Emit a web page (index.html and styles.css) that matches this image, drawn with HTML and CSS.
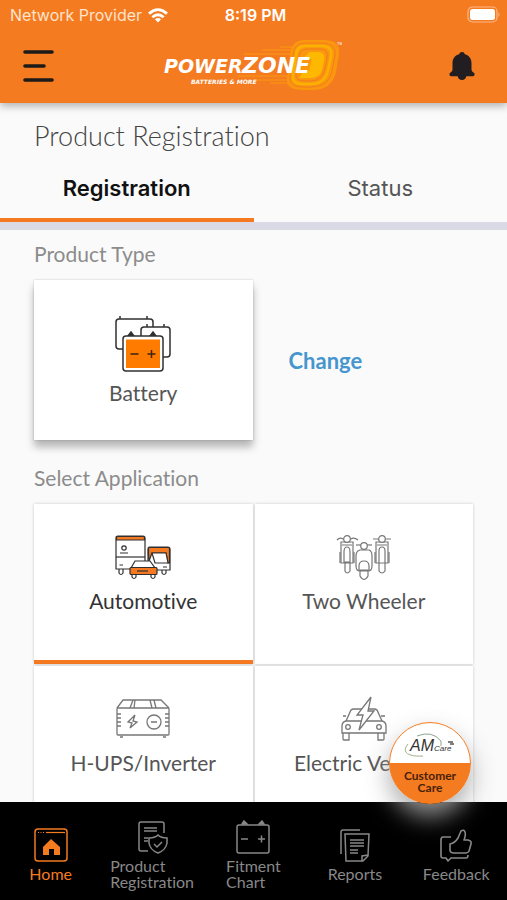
FILE: index.html
```html
<!DOCTYPE html>
<html lang="en">
<head>
<meta charset="utf-8">
<meta name="viewport" content="width=device-width, initial-scale=1">
<title>Product Registration</title>
<link rel="stylesheet" href="styles.css">
</head>
<body>
<div class="app">
  <header class="header">
    <div class="status">
      <span class="carrier">Network Provider
        <svg width="20" height="15" viewBox="0 0 20 15" aria-hidden="true"><g fill="none" stroke="#fff" stroke-width="2.8"><path d="M1 5.6Q10-2.4 19 5.6"/><path d="M4.3 9.2Q10 4.2 15.7 9.2"/></g><path d="M6.9 11.3Q10 8.8 13.1 11.3L10 14.6z" fill="#fff"/></svg>
      </span>
      <span class="time">8:19 PM</span>
      <span class="battery">
        <svg width="34" height="18" viewBox="0 0 34 18" aria-hidden="true"><rect x="1" y="1" width="29" height="15" rx="4.5" fill="none" stroke="#fbb98a" stroke-width="1.2"/><rect x="3" y="3" width="25" height="11" rx="2.5" fill="#fff"/><path d="M31.5 6Q33.6 8.500 31.500 11z" fill="#fbb98a"/></svg>
      </span>
    </div>
    <div class="bar">
      <button class="icon-button" aria-label="Menu">
        <svg width="32" height="34" viewBox="0 0 32 34"><path d="M3 3H30M3 17H22M3 31H30" stroke="#1d1a1a" stroke-width="3.6" stroke-linecap="round"/></svg>
      </button>
      <svg class="logo" width="182" height="56" viewBox="0 0 182 56" role="img" aria-label="Powerzone Batteries &amp; More">
        <g fill="none" stroke="#fa9b0c">
          <path d="M84 16H132M102 12H136M120 9H138M78 38H130M94 42H130M110 45H136" stroke-width="1"/>
        </g>
        <path d="M144 2H164Q181 2 179 17L176 34Q172 52 152 52H143Q126 52 127 41L130 16Q132 2 144 2z" fill="#fa970f"/>
        <g fill="none" stroke="#f47b20" stroke-width="1">
          <path d="M145 5H162Q177 5 175 18L172 33Q169 49 151 49H143Q129 49 130 40L133 17Q134 5 145 5z"/>
          <path d="M147 11H160Q169 11 167 21L165 31Q162 43 150 43H145Q135 43 136 36L139 20Q139 11 147 11z"/>
        </g>
        <path d="M146 8H161Q173 8 171 19L168 32Q165 46 151 46H144Q132 46 133 38L136 18Q136 8 146 8z" fill="none" stroke="#fbb100" stroke-width="2.500"/>
        <path d="M150 15H159Q165 16 163 23L161 32Q159 39 150 39H141L144 34H150L153 20H145z" fill="#ffb800" stroke="#ffb800" stroke-width="2"/>
        <text class="logo-name" x="4" y="35" font-size="19">POWER</text>
        <text class="logo-name" x="82" y="35" font-size="22">ZONE</text>
        <text class="logo-name" x="31" y="46" font-size="6">BATTERIES &amp; MORE</text>
        <text class="logo-mark" x="177" y="7" font-size="4">TM</text>
      </svg>
      <button class="icon-button" aria-label="Notifications">
        <svg width="28" height="30" viewBox="0 0 28 30"><path d="M14 1Q16.500 1 16.800 3.200C21.500 4.500 23.500 8 23.500 12V19Q24 21 25.500 21.400Q27 22 26.500 24Q26 25.200 24.500 25.200H18.300Q17.500 29 14 29T9.700 25.200H3.500Q2 25.200 1.500 24Q1 22 2.500 21.400Q4 21 4.500 19V12C4.500 8 6.500 4.500 11.200 3.200Q11.500 1 14 1z" fill="#211d20"/></svg>
      </button>
    </div>
  </header>

  <main class="content">
    <h1>Product Registration</h1>
    <div class="tabs" role="tablist">
      <button class="tab tab-active" role="tab" aria-selected="true">Registration</button>
      <button class="tab" role="tab" aria-selected="false">Status</button>
    </div>
    <section class="section">
      <h2>Product Type</h2>
      <div class="type-row">
        <button class="card card-raised">
          <svg width="56" height="58" viewBox="0 0 56 58" aria-hidden="true"><g fill="#fff" stroke="#303030" stroke-width="1.500"><path d="M5 1V4M32 1V4" /><rect x="1" y="4" width="37" height="30" rx="3"/><path d="M32 9V12M49 9V12"/><rect x="26" y="12" width="29" height="30" rx="3"/><path d="M13 21L16 17L19 21zM35 21L38 17L41 21z" fill="#303030"/><rect x="8" y="21" width="40" height="35" rx="3"/></g><path d="M11 24.500H45V53H11z" fill="#ff7b00"/><path d="M15.500 39H23.500M32.500 39H40.500M36.500 35V43" stroke="#3d2412" stroke-width="1.500"/></svg>
          <span>Battery</span>
        </button>
        <a class="change" href="#change">Change</a>
      </div>
      <h2 class="application-title">Select Application</h2>
      <div class="grid">
        <button class="card card-selected">
          <svg width="56" height="46" viewBox="0 0 56 46" aria-hidden="true"><g fill="#fff" stroke="#303030" stroke-width="1.200"><path d="M4 34V38Q6 41 8 38V34M47 34V38Q49 41 51 38V34"/><path d="M3 1H28Q30 1 30 3V34H1V3Q1 1 3 1z"/><path d="M1.500 5V3Q1.500 1.500 3 1.500H28Q29.500 1.500 29.500 3V5z" fill="#f47920"/><path d="M1 22H30"/><circle cx="9" cy="13" r="2.200"/><path d="M5 18H13M4.500 30H8"/><path d="M34 12H53Q55 12 55 14V35H33V14Q33 12 34 12z"/><path d="M33.500 18V14Q33.500 12.500 35 12.500H53Q54.500 12.500 54.500 14V28H53L51 18H37L34 26z" fill="#f47920"/><path d="M37 18H51L53 28H40zM48 32H52"/><path d="M17 38V42Q19 45 21 42V38M36 38V42Q38 45 40 42V38"/><path d="M16 33L20 26H35L40 33z"/><rect x="15" y="32.500" width="27" height="7" rx="1" fill="#f47920"/><path d="M22 36H33"/></g></svg>
          <span>Automotive</span>
        </button>
        <button class="card">
          <svg width="56" height="46" viewBox="0 0 56 46" aria-hidden="true"><g fill="#fff" stroke="#777" stroke-width="1.200"><path d="M1 5Q4 2 7 4H15Q18 2 22 5" fill="none"/><path d="M5 7H17V28H5zM9 28V36Q11 40 14 36V28zM8 27V17Q8 12 11 12T14 17V27z"/><circle cx="11" cy="4" r="3.300"/><path d="M6 10H16M4 17V28M18 17V28M37 4H55"/><path d="M40 7H52V28H40zM43 28V36Q46 40 49 36V28zM43 28V16Q43 12 46 12T49 16V28z"/><circle cx="46" cy="4" r="3.300"/><path d="M41 10H51M39 17V28M53 17V28"/><path d="M24 15H33Q36 16 36 21V31Q36 36 32 36H24Q20 36 20 31V21Q20 16 24 15z"/><path d="M20 10H36"/><circle cx="28" cy="11" r="3.300"/><path d="M24 36H32V41Q28 48 24 41zM23 35V31Q23 26 28 26T33 31V35z"/></g></svg>
          <span>Two Wheeler</span>
        </button>
        <button class="card">
          <svg width="56" height="46" viewBox="0 0 56 46" aria-hidden="true"><g fill="none" stroke="#777" stroke-width="1.300"><path d="M2 11L8 3H46L54 11M15 11L18 3M19 11L20 3M37 11L35 3M41 11L39 3"/><rect x="2" y="11" width="52" height="27" rx="1"/><path d="M2 17H6M2 21H6M2 25H6M2 29H6M50 17H54M50 21H54M50 25H54M50 29H54M5 40H8M48 40H51"/><circle cx="39" cy="25" r="7"/><path d="M36 25H42M20 18L13 25L17 26L15 31L22 25L18 24z"/></g></svg>
          <span>H-UPS/Inverter</span>
        </button>
        <button class="card">
          <svg width="56" height="46" viewBox="0 0 56 46" aria-hidden="true"><g fill="#fff" stroke="#777" stroke-width="1.300"><path d="M10 24L15 13Q16 12 18 12H38Q40 12 41 13L46 24M10 19H7M45 19H49"/><path d="M10 24H46Q50 25 50 29V36H6V29Q6 25 10 24zM7 36V42Q7 43 8 43H13V36M42 36V43H47Q48 43 48 42V36M6 36V33"/><circle cx="12" cy="30" r="2.300"/><circle cx="43" cy="30" r="2.300"/><path d="M35 0L21 18H27L23 33L38 14H32z"/></g></svg>
          <span>Electric Vehicle</span>
        </button>
      </div>
    </section>
  </main>

  <button class="care">
    <svg width="52" height="28" viewBox="0 0 52 28" aria-hidden="true"><path d="M13 4Q28-2 37 9V14" fill="none" stroke="#8ca58c" stroke-width="1"/><path d="M4 12C-3 20 4 25 19 24" fill="none" stroke="#9fb08d" stroke-width="1"/><text class="care-logo" x="6" y="19" font-size="16">AM</text><text class="care-logo" x="30" y="19" font-size="8">Care</text><path d="M44 10H49M46 12H50" stroke="#555" stroke-width="1.500"/></svg>
    <span>Customer<br>Care</span>
  </button>

  <nav class="nav">
    <a class="nav-active" href="#home">
      <svg width="34" height="34" viewBox="0 0 34 34" aria-hidden="true"><rect x="1" y="1" width="32" height="32" rx="3" fill="none" stroke="currentColor" stroke-width="1.500"/><path d="M12 4.500H31" stroke="currentColor" stroke-width="1.200"/><path d="M4 4.500H10" stroke="currentColor" stroke-dasharray="1 1.500"/><path d="M17 11L26 19V27H20V21H15V27H9V19z" fill="currentColor"/></svg>
      <span>Home</span>
    </a>
    <a href="#registration">
      <svg width="34" height="34" viewBox="0 0 34 34" aria-hidden="true"><g fill="none" stroke="currentColor" stroke-width="1.500"><path d="M13 31H6Q4 31 4 29V4Q4 2 6 2H27Q29 2 29 4V13M9 8H22M9 11H22M9 18H13M9 21H13"/><path d="M23 15Q26 18 32 18V23Q31 30 23 33Q15 30 14 23V18Q20 18 23 15z"/><path d="M19 24L22 27L27 22"/></g></svg>
      <span>Product<br>Registration</span>
    </a>
    <a href="#fitment">
      <svg width="34" height="34" viewBox="0 0 34 34" aria-hidden="true"><g fill="none" stroke="currentColor" stroke-width="1.500"><rect x="1" y="5" width="32" height="28" rx="2"/><path d="M5 19H12M22 19H29M25.500 15.500V22.500"/><path d="M6 4L8 1L11 4zM23 4L26 1L28 4z" fill="currentColor"/></g></svg>
      <span>Fitment<br>Chart</span>
    </a>
    <a href="#reports">
      <svg width="34" height="34" viewBox="0 0 34 34" aria-hidden="true"><g fill="none" stroke="currentColor" stroke-width="1.500"><path d="M3 26V4Q3 2 5 2H22"/><path d="M7 6H31L30 28L25 33H8zM30 27L24 28V33M12 12H26M12 15H26M12 18H26M12 22H20M12 25H20"/></g></svg>
      <span>Reports</span>
    </a>
    <a href="#feedback">
      <svg width="34" height="34" viewBox="0 0 34 34" aria-hidden="true"><g fill="none" stroke="currentColor" stroke-width="1.600" stroke-linejoin="round"><path d="M12 9H4Q2 9 2 12V28Q2 30 4 30H7L9 33L12 30H27Q29 30 29 27"/><path d="M11 16Q16 15 19 10L22 3Q25 1 26 4Q27 7 25 12H29Q33 13 32 16L30 23Q29 25 27 25H15Q11 25 11 22z"/></g></svg>
      <span>Feedback</span>
    </a>
  </nav>
</div>
</body>
</html>
```

FILE: styles.css
```css
* {
  box-sizing: border-box;
}

body {
  margin: 0;
  background: #fafafa;
  color: #555;
  font-family: Lato, "Liberation Sans", sans-serif;
  font-variant-ligatures: none;
}

button {
  margin: 0;
  padding: 0;
  border: 0;
  background: none;
  color: inherit;
  font: inherit;
  font-variant-ligatures: none;
}

a {
  color: inherit;
  text-decoration: none;
}

svg {
  display: block;
}

.app {
  position: relative;
  display: flex;
  flex-direction: column;
  height: 100vh;
  overflow: hidden;
}

.header {
  z-index: 1;
  flex: none;
  background: #f47b20;
  box-shadow: 0 3px 8px rgba(0, 0, 0, 0.3);
}

.status {
  display: grid;
  grid-template-columns: 1fr auto 1fr;
  align-items: center;
  height: 30px;
  padding: 0 6px 0 10px;
  color: #fff;
  font: 500 16px/20px Inter, sans-serif;
}

.carrier {
  display: flex;
  align-items: center;
  gap: 6px;
  color: #ffe3cd;
  font-weight: 400;
}

.time {
  font-weight: 600;
}

.battery {
  justify-self: end;
}

.bar {
  display: flex;
  align-items: center;
  justify-content: space-between;
  height: 73px;
  padding: 0 31px 2px 22px;
}

.logo-name {
  fill: #fff;
  font-family: "DejaVu Sans", sans-serif;
  font-style: italic;
  font-weight: 700;
}

.logo-mark {
  fill: #fff;
  font-family: "Liberation Sans", sans-serif;
}

.content {
  flex: 1;
  min-height: 0;
  overflow: hidden;
}

h1 {
  margin: 0;
  padding: 17px 34px 1px;
  color: #444;
  font-size: 27px;
  font-weight: 300;
  line-height: 32px;
}

h2 {
  margin: 0;
  color: #8c8c8c;
  font-size: 21px;
  font-weight: 400;
  line-height: 24px;
}

.tabs {
  display: grid;
  grid-template-columns: 1fr 1fr;
  border-bottom: 8px solid #dadae6;
}

.tab {
  height: 69px;
  padding-top: 4px;
  border-bottom: 4px solid transparent;
  font: 400 22px/28px Inter, sans-serif;
}

.tab-active {
  border-color: #f47920;
  color: #111;
  font-weight: 600;
}

.section {
  padding: 12px 34px 0;
}

.type-row,
.grid {
  display: grid;
  grid-template-columns: 1fr 1fr;
  gap: 2px;
}

.type-row {
  align-items: center;
  margin-top: 14px;
}

.card {
  display: flex;
  flex-direction: column;
  align-items: center;
  height: 160px;
  padding-top: 31px;
  border-bottom: 4px solid transparent;
  background: #fff;
  background-clip: border-box;
  box-shadow: 0 0 3px rgba(0, 0, 0, 0.2);
  font-size: 21px;
  line-height: 24px;
}

.card span {
  margin-top: 8px;
  white-space: nowrap;
}

.card svg {
  overflow: visible;
}

.card-raised {
  padding-top: 35px;
  box-shadow: 0 0 2px rgba(0, 0, 0, 0.2), 0 7px 8px rgba(0, 0, 0, 0.28);
}

.card-selected {
  border-color: #f47920;
  color: #333;
}

.change {
  padding-left: 34px;
  color: #4596cf;
  font-size: 22px;
  font-weight: 700;
}

.application-title {
  margin-top: 26px;
}

.grid {
  margin-top: 14px;
}

.care {
  position: absolute;
  right: 36px;
  bottom: 96px;
  z-index: 3;
  display: flex;
  flex-direction: column;
  align-items: center;
  width: 82px;
  height: 82px;
  padding-top: 9px;
  border: 1px solid #f47b20;
  border-radius: 50%;
  background: linear-gradient(#fff 50%, #f47b20 50%);
  box-shadow: 0 12px 24px rgba(165, 165, 165, 0.9);
  color: #4a210b;
  font-size: 12px;
  font-weight: 700;
  line-height: 12px;
}

.care span {
  margin-top: 10px;
}

.care-logo {
  fill: #333;
  font-family: "Liberation Sans", sans-serif;
  font-style: italic;
  font-weight: 400;
}

.nav {
  z-index: 2;
  display: grid;
  grid-template-columns: repeat(5, 1fr);
  flex: none;
  align-items: center;
  height: 98px;
  padding-top: 8px;
  background: #000;
  color: #888;
  font-size: 16px;
  line-height: 16px;
}

.nav a {
  display: flex;
  flex-direction: column;
  align-items: center;
  gap: 4px;
}

.nav .nav-active {
  color: #f47b20;
}
```
